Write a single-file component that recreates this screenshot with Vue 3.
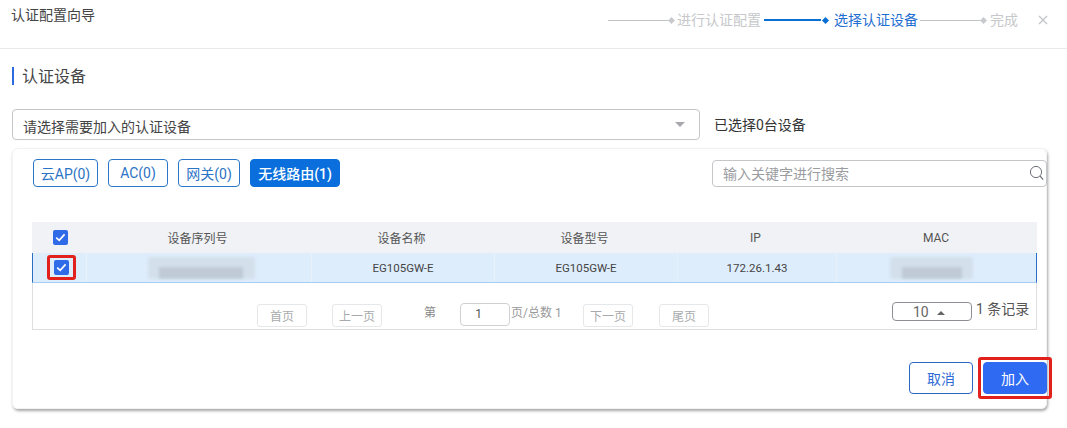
<script setup>
const tabs = [
  { label: '云AP(0)', width: '65px' },
  { label: 'AC(0)', width: '60px' },
  { label: '网关(0)', width: '62px' },
  { label: '无线路由(1)', width: '90px', active: true }
]
const columns = ['设备序列号', '设备名称', '设备型号', 'IP', 'MAC']
</script>

<template>
  <div class="page">
    <header class="head">
      <div class="head-title">认证配置向导</div>
      <div class="steps">
        <span class="line grey"></span><i class="dot grey"></i><span class="step-text done">进行认证配置</span>
        <span class="line blue"></span><i class="dot blue"></i><span class="step-text now">选择认证设备</span>
        <span class="line grey"></span><i class="dot grey"></i><span class="step-text done last">完成</span>
        <svg class="close" width="10" height="10" viewBox="0 0 10 10"><path d="M1 1l8 8M9 1l-8 8" stroke="#c4c6ca" stroke-width="1.4" fill="none"/></svg>
      </div>
    </header>

    <main class="body">
      <h2 class="section">认证设备</h2>

      <div class="select-row">
        <div class="select">
          <span>请选择需要加入的认证设备</span>
          <i class="caret"></i>
        </div>
        <span class="count">已选择0台设备</span>
      </div>

      <section class="card">
        <div class="toolbar">
          <button v-for="t in tabs" :key="t.label" class="tab" :class="{ active: t.active }" :style="{ width: t.width }">{{ t.label }}</button>
          <div class="search">
            <span>输入关键字进行搜索</span>
            <svg width="16" height="16" viewBox="0 0 16 16"><circle cx="7" cy="7" r="5.6" stroke="#70747a" stroke-width="1" fill="none"/><path d="M11 11l3.2 3.6" stroke="#70747a" stroke-width="1.2" fill="none"/></svg>
          </div>
        </div>

        <div class="table">
          <div class="row thead">
            <div class="cell first"><span class="check"><svg width="11" height="9" viewBox="0 0 11 9"><path d="M1.2 4.6l3 2.8 5.4-6" stroke="#fff" stroke-width="1.7" fill="none"/></svg></span></div>
            <div v-for="c in columns" :key="c" class="cell">{{ c }}</div>
          </div>
          <div class="row tbody">
            <div class="cell first"><span class="check marked"><svg width="11" height="9" viewBox="0 0 11 9"><path d="M1.2 4.6l3 2.8 5.4-6" stroke="#fff" stroke-width="1.7" fill="none"/></svg></span></div>
            <div class="cell"><span class="blur sn"></span></div>
            <div class="cell">EG105GW-E</div>
            <div class="cell">EG105GW-E</div>
            <div class="cell">172.26.1.43</div>
            <div class="cell"><span class="blur mac"></span></div>
          </div>
          <div class="pager">
            <button class="pg first-page">首页</button>
            <button class="pg prev">上一页</button>
            <span class="pg-label">第</span>
            <span class="pg-input">1</span>
            <span class="pg-total">页/总数 1</span>
            <button class="pg next">下一页</button>
            <button class="pg end">尾页</button>
            <span class="size">10 <i class="up"></i></span>
            <span class="records">1 条记录</span>
          </div>
        </div>

        <div class="actions">
          <button class="btn ghost">取消</button>
          <button class="btn primary">加入</button>
        </div>
      </section>
    </main>
  </div>
</template>

<style>
html, body { margin: 0; background: #fff; overflow: hidden; }
</style>

<style scoped>
.page {
  width: 1067px;
  height: 428px;
  background: #fff;
  color: #333;
  font-family: Roboto, "Noto Sans CJK SC", sans-serif;
  font-size: 12px;
  overflow: hidden;
}
button { font-family: inherit; padding: 0; cursor: pointer; }
.head {
  height: 48px;
  border-bottom: 1px solid #e8e9eb;
  display: flex;
  justify-content: space-between;
  padding-left: 11px;
}
.head-title { font-size: 14px; line-height: 18px; margin-top: 6px; color: #444; }
.steps { display: flex; align-items: center; height: 40px; padding-right: 19px; font-size: 14px; }
.line { flex: none; height: 1px; width: 60px; }
.line.grey { background: #bfc1c4; }
.line.blue { height: 2px; width: 57px; background: #0a6ed4; margin-left: 3px; }
.dot { flex: none; width: 5px; height: 5px; transform: rotate(45deg); margin-left: 1px; }
.dot.grey { background: #c8cacd; }
.dot.blue { background: #0a6ed4; margin-left: 2px; }
.step-text { margin-left: 3px; line-height: 18px; white-space: nowrap; }
.step-text.done { color: #c6c8cb; }
.step-text.now { color: #1f6fd0; margin-left: 6px; margin-right: 2px; }
.step-text.last { margin-left: 4px; }
.close { flex: none; margin-left: 20px; }
.body { padding: 0 20px 0 12px; }
.section {
  margin: 18px 0 0;
  height: 18px;
  border-left: 2px solid #2f6be0;
  padding-left: 8px;
  font-size: 16px;
  font-weight: 400;
  line-height: 19px;
  color: #444;
}
.select-row { display: flex; align-items: center; margin-top: 24px; }
.select {
  width: 688px;
  height: 31px;
  box-sizing: border-box;
  border: 1px solid #c4c6c9;
  border-radius: 4px;
  display: flex;
  align-items: center;
  justify-content: space-between;
  padding: 2px 14px 0 10px;
  font-size: 14px;
  color: #444;
}
.caret {
  width: 0;
  height: 0;
  border-left: 5px solid transparent;
  border-right: 5px solid transparent;
  border-top: 5px solid #a6a8ab;
  margin-top: -3px;
}
.count { margin-left: 14px; font-size: 14px; color: #333; margin-top: -2px; }
.card {
  margin-top: 8px;
  width: 1035px;
  height: 261px;
  box-sizing: border-box;
  border-radius: 6px;
  border: 1px solid #f1f2f3;
  box-shadow: 1px 2px 3px rgba(0, 0, 0, 0.35);
  padding: 10px 0 0 20px;
}
.toolbar { display: flex; align-items: center; gap: 10px; height: 28px; }
.tab {
  flex: none;
  height: 28px;
  box-sizing: border-box;
  border: 1px solid #2a77c8;
  border-radius: 4px;
  background: #fff;
  color: #2b73c4;
  font-size: 14px;
}
.tab.active { background: #0a6fdc; border-color: #0a6fdc; color: #fff; font-weight: 500; }
.search {
  flex: none;
  margin-left: 362px;
  width: 335px;
  height: 27px;
  box-sizing: border-box;
  border: 1px solid #c4c6c9;
  border-radius: 4px;
  display: flex;
  align-items: center;
  justify-content: space-between;
  padding: 0 1px 0 10px;
  font-size: 14px;
  color: #9a9c9f;
}
.table {
  margin-top: 35px;
  width: 1005px;
  height: 108px;
  box-sizing: border-box;
  border-left: 1px solid #dcdee0;
  border-right: 1px solid #dcdee0;
  border-bottom: 1px solid #dcdee0;
  margin-left: -1px;
}
.row {
  display: grid;
  grid-template-columns: 53px 225px 183px 183px 159px 1fr;
  margin: 0 -1px;
}
.cell { display: flex; align-items: center; justify-content: center; }
.cell.first { padding-left: 4px; }
.thead { height: 31px; background: #f0f2f5; color: #555; }
.thead .check { margin-top: -1px; }
.tbody {
  height: 30px;
  box-sizing: border-box;
  background: #deedfc;
  border-left: 1px solid #2a6fc4;
  border-right: 1px solid #2a6fc4;
  border-bottom: 1px solid #a8cdf2;
  color: #444;
  font-size: 11.5px;
}
.tbody .cell + .cell { border-left: 1px solid #e6f1fc; }
.check {
  width: 15px;
  height: 15px;
  border-radius: 2px;
  background: #2f6be8;
  display: flex;
  align-items: center;
  justify-content: center;
  position: relative;
}
.check.marked::after {
  content: "";
  position: absolute;
  left: -7px;
  top: -5px;
  width: 29px;
  height: 25px;
  box-sizing: border-box;
  border: 3px solid #e2201c;
  border-radius: 3px;
}
.blur {
  display: block;
  height: 22px;
  position: relative;
  filter: blur(1.5px);
  background: #d3e0ec;
  border-radius: 3px;
}
.blur::after {
  content: "";
  position: absolute;
  bottom: 0;
  height: 12px;
  background: #bfcad6;
}
.sn { width: 107px; margin-left: 4px; }
.sn::after { left: 11px; width: 84px; }
.mac { width: 83px; margin-right: 10px; }
.mac::after { left: 12px; width: 60px; }
.pager {
  height: 46px;
  display: flex;
  align-items: flex-start;
  padding-left: 224px;
  color: #999;
}
.pg {
  flex: none;
  width: 50px;
  height: 23px;
  margin-top: 21px;
  box-sizing: border-box;
  border: 1px solid #e6e7e9;
  border-radius: 3px;
  background: #fff;
  color: #a8aaad;
  font-size: 12px;
}
.prev { margin-left: 25px; }
.pg-label { margin-left: 42px; margin-top: 21px; line-height: 18px; color: #888; }
.pg-input {
  flex: none;
  width: 50px;
  height: 23px;
  margin: 20px 0 0 24px;
  box-sizing: border-box;
  border: 1px solid #cfd1d4;
  border-radius: 4px;
  color: #555;
  text-align: center;
  line-height: 21px;
  padding-right: 13px;
}
.pg-total { flex: none; margin: 21px 0 0 1px; width: 72px; line-height: 18px; color: #999; }
.end { margin-left: 26px; }
.size {
  flex: none;
  margin: 19px 0 0 183px;
  width: 80px;
  height: 19px;
  box-sizing: border-box;
  border: 1px solid #8d9094;
  border-radius: 4px;
  font-size: 14px;
  line-height: 18px;
  color: #666;
  text-align: center;
  padding-right: 6px;
}
.up {
  display: inline-block;
  width: 0;
  height: 0;
  margin-left: 5px;
  border-left: 4px solid transparent;
  border-right: 4px solid transparent;
  border-bottom: 4px solid #666;
  vertical-align: 2px;
}
.records { flex: none; margin: 16px 0 0 4px; font-size: 14px; line-height: 20px; color: #555; white-space: nowrap; }
.actions { display: flex; justify-content: flex-end; gap: 10px; margin-top: 32px; margin-right: -1px; }
.btn {
  width: 64px;
  height: 32px;
  box-sizing: border-box;
  border-radius: 4px;
  font-size: 14px;
}
.ghost { border: 1px solid #2a68c4; background: #fff; color: #2f6bd8; }
.primary { border: 1px solid #2f6bf2; background: #2f6bf2; color: #fff; position: relative; }
.primary::after {
  content: "";
  position: absolute;
  inset: -6px;
  border: 3px solid #e2201c;
  border-radius: 3px;
}
</style>
